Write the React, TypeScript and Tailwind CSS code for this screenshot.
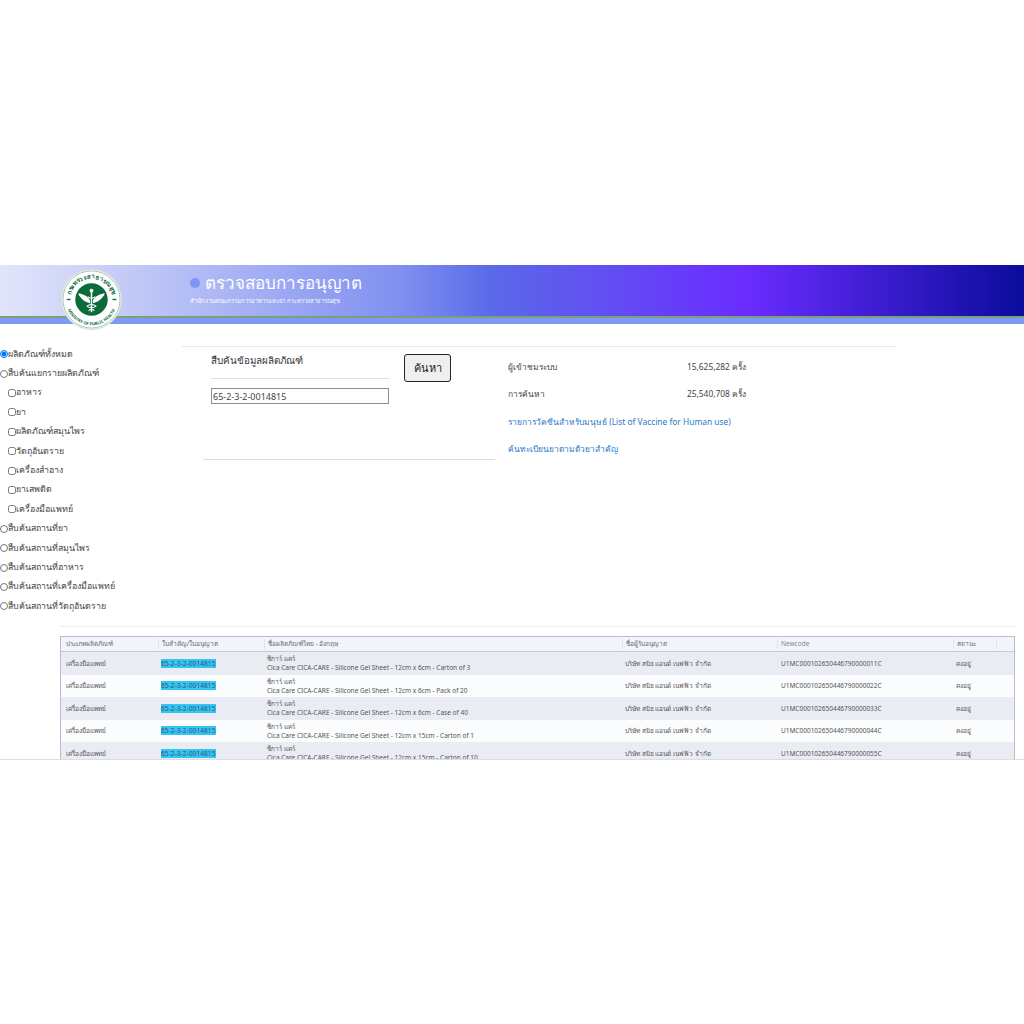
const font = { fontFamily: '"Noto Sans", "Open Sans", sans-serif' };

const sideItems = [
  { label: "ผลิตภัณฑ์ทั้งหมด", type: "radio", checked: true },
  { label: "สืบค้นแยกรายผลิตภัณฑ์", type: "radio" },
  { label: "อาหาร", type: "check" },
  { label: "ยา", type: "check" },
  { label: "ผลิตภัณฑ์สมุนไพร", type: "check" },
  { label: "วัตถุอันตราย", type: "check" },
  { label: "เครื่องสำอาง", type: "check" },
  { label: "ยาเสพติด", type: "check" },
  { label: "เครื่องมือแพทย์", type: "check" },
  { label: "สืบค้นสถานที่ยา", type: "radio" },
  { label: "สืบค้นสถานที่สมุนไพร", type: "radio" },
  { label: "สืบค้นสถานที่อาหาร", type: "radio" },
  { label: "สืบค้นสถานที่เครื่องมือแพทย์", type: "radio" },
  { label: "สืบค้นสถานที่วัตถุอันตราย", type: "radio" },
];

const rows = [
  { size: "12cm x 6cm - Carton of 3", code: "U1MC000102650446790000011C" },
  { size: "12cm x 6cm - Pack of 20", code: "U1MC000102650446790000022C" },
  { size: "12cm x 6cm - Case of 40", code: "U1MC000102650446790000033C" },
  { size: "12cm x 15cm - Carton of 1", code: "U1MC000102650446790000044C" },
  { size: "12cm x 15cm - Carton of 10", code: "U1MC000102650446790000055C" },
];

function Logo() {
  return (
    <svg viewBox="0 0 64 64" className="w-[61px] h-[61px]">
      <defs>
        <path id="arcTop" d="M10 32 A22 22 0 0 1 54 32" />
        <path id="arcBottom" d="M5 32 A27 27 0 0 0 59 32" />
      </defs>
      <circle cx="32" cy="32" r="31.5" fill="#ffffff" stroke="#d5dbd5" strokeWidth="1" />
      <circle cx="32" cy="32" r="30" fill="none" stroke="#5f9a7a" strokeWidth="0.6" />
      <circle cx="32" cy="32" r="17" fill="#0b6b3a" />
      <text fontSize="6.6" fontWeight="700" fill="#0b6b3a">
        <textPath href="#arcTop" startOffset="50%" textAnchor="middle">กระทรวงสาธารณสุข</textPath>
      </text>
      <text fontSize="4.3" fontWeight="700" fill="#0b6b3a">
        <textPath href="#arcBottom" startOffset="50%" textAnchor="middle">MINISTRY OF PUBLIC HEALTH</textPath>
      </text>
      <rect x="6" y="31.3" width="4" height="1.4" fill="#0b6b3a" />
      <rect x="54" y="31.3" width="4" height="1.4" fill="#0b6b3a" />
      <g transform="translate(32 32) scale(0.78) translate(-32 -32)">
        <path d="M14 24 C20 24 26 27 30 33 L30 37 C24 36 17 31 14 24 Z M50 24 C44 24 38 27 34 33 L34 37 C40 36 47 31 50 24 Z" fill="#ffffff" />
        <rect x="31" y="20" width="2" height="29" fill="#ffffff" />
        <circle cx="32" cy="20" r="2.6" fill="#ffffff" />
        <path d="M26 41 C29 38 35 38 38 41 C35 44 29 44 26 41 Z M28 47 C30 45 34 45 36 47" fill="none" stroke="#ffffff" strokeWidth="1.4" />
        <path d="M27 28 C29 31 35 31 37 28" fill="none" stroke="#ffffff" strokeWidth="1.4" />
      </g>
    </svg>
  );
}

function SideRow({ label, type, checked }: { label: string; type: string; checked?: boolean }) {
  return (
    <div className={`flex items-center h-[19.4px] text-[8.8px] text-[#444444] ${type === "check" ? "pl-[8px]" : ""}`}>
      {type === "radio" ? (
        <input type="radio" name="scope" defaultChecked={checked} className="w-[8px] h-[8px] m-0" />
      ) : (
        <input type="checkbox" className="w-[8px] h-[8px] m-0" />
      )}
      <span>{label}</span>
    </div>
  );
}

export default function App() {
  return (
    <div className="w-[1024px] h-[1024px] bg-white overflow-hidden" style={font}>
      <div className="h-[265px]" />

      <div className="relative h-[59px] bg-[#7f9af5]">
        <div className="h-[53px] flex items-center pl-[190px] bg-[linear-gradient(90deg,#e2e5fa_0%,#8090f0_39%,#5a6ae8_48%,#6a2cff_73%,#0a0c9c_100%)] border-b-2 border-[#7da07a]">
          <div className="-mt-[1px]">
            <div className="flex items-center gap-[5px] text-white text-[17px] leading-[22px] font-medium">
              <span className="w-[10px] h-[10px] rounded-full bg-[#7e97f5]" />
              <span>ตรวจสอบการอนุญาต</span>
            </div>
            <div className="text-white text-[5.9px] leading-[14px]">สำนักงานคณะกรรมการอาหารและยา กระทรวงสาธารณสุข</div>
          </div>
        </div>
        <div className="absolute left-[61px] top-[4px]">
          <Logo />
        </div>
      </div>

      <div className="flex h-[302px]">
        <div className="w-[182px] shrink-0 pt-[20.6px]">
          {sideItems.map((item) => (
            <SideRow key={item.label} {...item} />
          ))}
        </div>

        <div className="w-[714px] mt-[22px] h-[114px] border-t border-[#e8e8e8] flex">
          <div className="w-[313px] pl-[29px] relative">
            <div className="flex">
              <div className="w-[179px]">
                <div className="h-[32px] border-b border-[#e0e0e0] pt-[6px] text-[9.8px] leading-[16px] font-medium text-[#333333]">สืบค้นข้อมูลผลิตภัณฑ์</div>
                <input
                  defaultValue="65-2-3-2-0014815"
                  className="mt-[9px] w-[178px] h-[16px] border border-[#8f8f8f] px-[1px] text-[9px] text-[#444444] outline-none"
                />
              </div>
              <button className="ml-[14px] mt-[7px] w-[47px] h-[28px] border border-[#222222] rounded-[3px] bg-[#efefef] text-[11px] text-[#222222]">
                ค้นหา
              </button>
            </div>
            <div className="absolute left-[21px] right-0 top-[112px] border-t border-[#dddddd]" />
          </div>

          <div className="pl-[13px] pt-[14px] text-[8.4px] text-[#444444]">
            <div className="flex h-[27.3px] items-start"><span className="w-[179px]">ผู้เข้าชมระบบ</span><span>15,625,282 ครั้ง</span></div>
            <div className="flex h-[27.3px] items-start"><span className="w-[179px]">การค้นหา</span><span>25,540,708 ครั้ง</span></div>
            <a className="block h-[27.3px] text-[#2a78c8]">รายการวัคซีนสำหรับมนุษย์ (List of Vaccine for Human use)</a>
            <a className="block h-[27.3px] text-[#2a78c8]">ค้นทะเบียนยาตามตัวยาสำคัญ</a>
          </div>
        </div>
      </div>

      <div className="ml-[60px] mr-[9px] border-t border-[#eeeeee] pt-[9px]">
        <div className="h-[123px] border border-b-0 border-[#b5bdd0] overflow-hidden">
          <div className="flex h-[15px] items-center bg-[#f1f5fb] text-[6.5px] text-[#5f6875] border-b border-[#c4cbd8]">
            <span className="w-[97px] pl-[5px]">ประเภทผลิตภัณฑ์</span>
            <span className="w-[106px] pl-[3px] border-l border-[#dfe4ee]">ใบสำคัญ/ใบอนุญาต</span>
            <span className="w-[358px] pl-[3px] border-l border-[#dfe4ee]">ชื่อผลิตภัณฑ์ไทย - อังกฤษ</span>
            <span className="w-[155px] pl-[3px] border-l border-[#dfe4ee]">ชื่อผู้รับอนุญาต</span>
            <span className="w-[176px] pl-[3px] border-l border-[#dfe4ee] text-[#808890]">Newcode</span>
            <span className="w-[44px] pl-[3px] border-x border-[#dfe4ee]">สถานะ</span>
          </div>
          {rows.map((row, i) => (
            <div key={row.code} className={`flex items-center h-[22.5px] text-[6.5px] leading-[9px] text-[#555555] ${i % 2 === 0 ? "bg-[#e9edf3]" : "bg-[#fbfcfd]"}`}>
              <span className="w-[97px] pl-[5px]">เครื่องมือแพทย์</span>
              <span className="w-[106px] pl-[3px]"><span className="bg-[#33c5f5] text-[6.7px] text-[#35566e]">65-2-3-2-0014815</span></span>
              <div className="w-[358px] pl-[3px]">
                <div>ซีการ์ แคร์</div>
                <div className="whitespace-nowrap">Cica Care CICA-CARE - Silicone Gel Sheet - {row.size}</div>
              </div>
              <span className="w-[155px] pl-[3px]">บริษัท สมิธ แอนด์ เนฟฟิว จำกัด</span>
              <span className="w-[176px] pl-[4px]">{row.code}</span>
              <span className="w-[44px] pl-[3px]">คงอยู่</span>
            </div>
          ))}
        </div>
      </div>
      <div className="border-t border-[#dddddd]" />
    </div>
  );
}
